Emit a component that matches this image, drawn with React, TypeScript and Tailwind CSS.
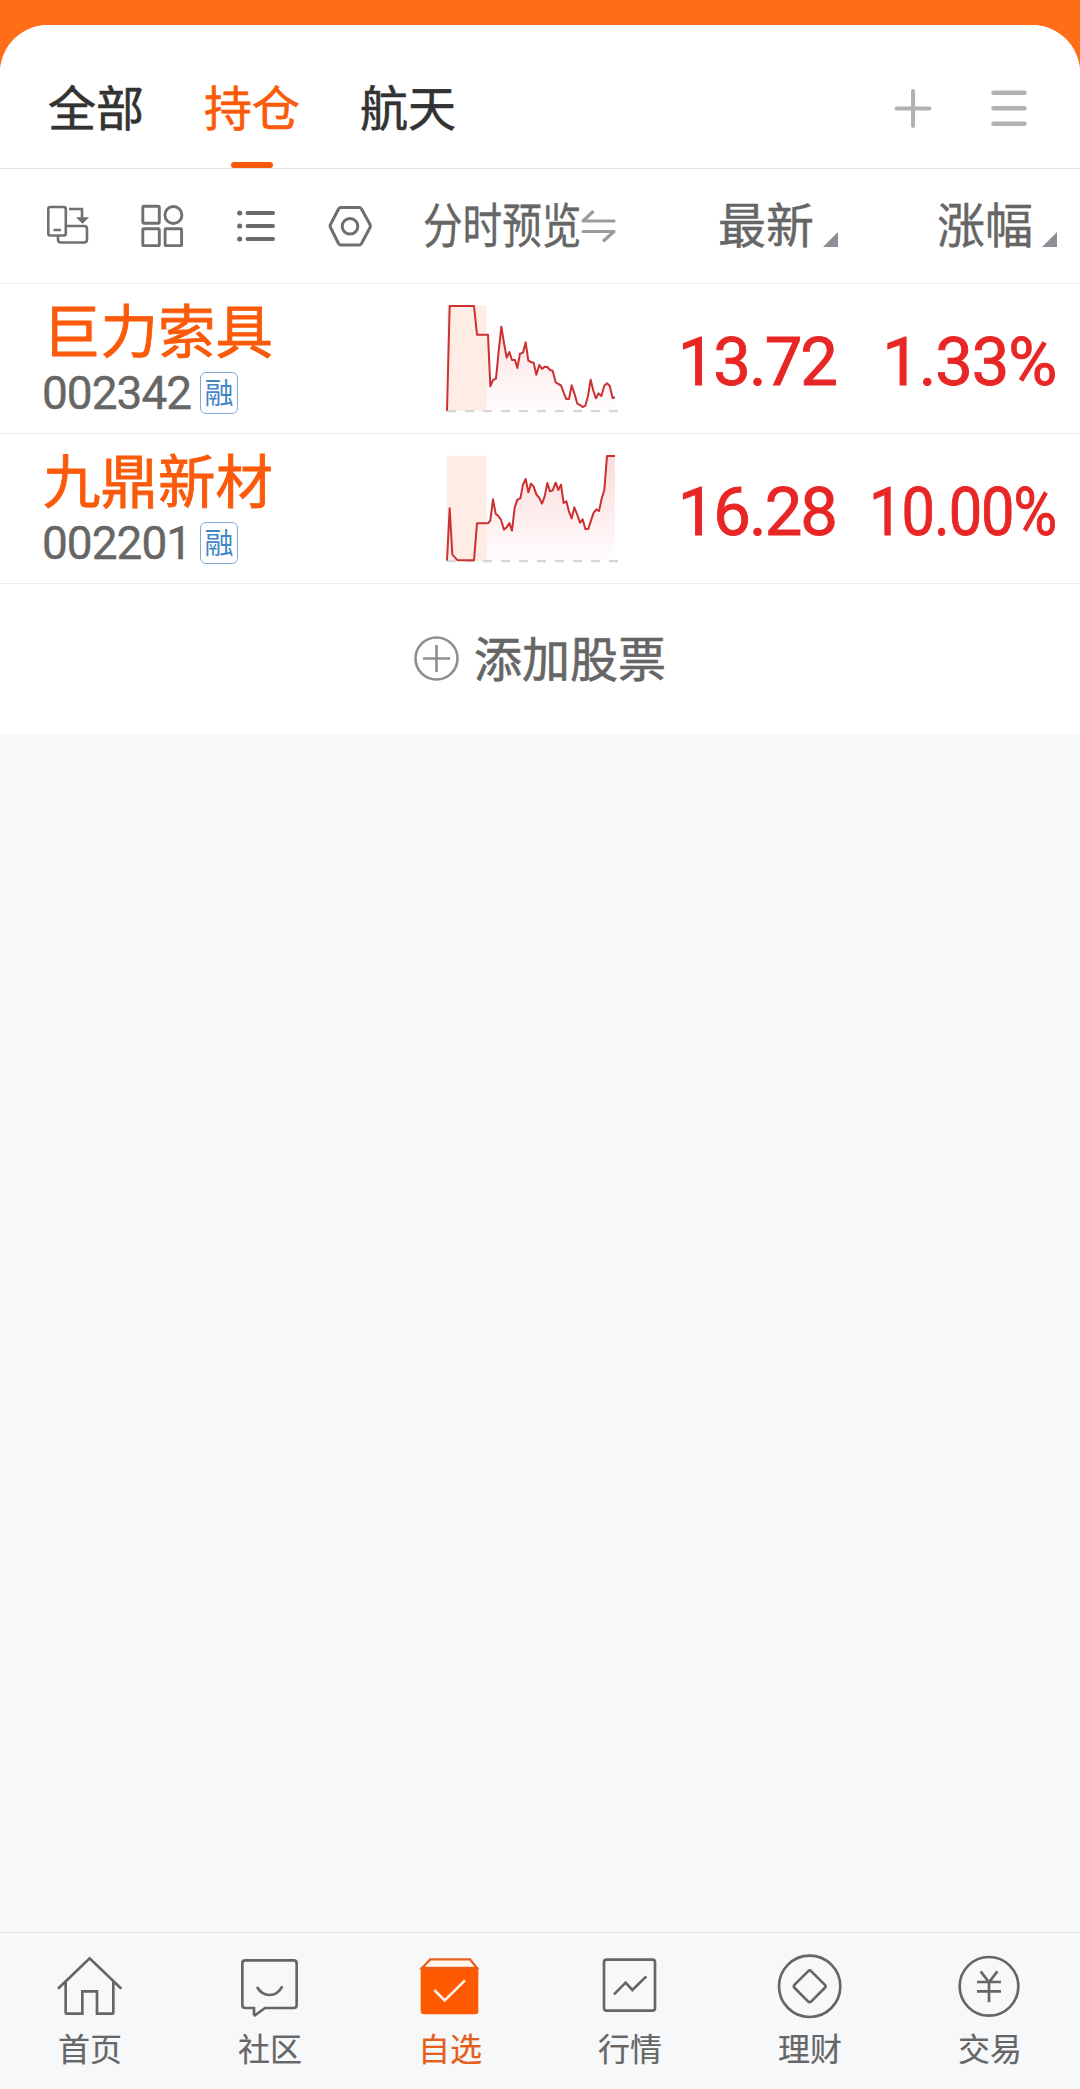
import React from 'react';

const stocks = [
  {
    name: '巨力索具',
    code: '002342',
    price: '13.72',
    change: '1.33%',
    changeClass: '',
    points:
      '51,363 59,49 132,49 141,135 174,135 181,290 189,271 198,267 206,185 214,111 222,160 230,204 238,187 246,211 255,211 262,235 270,192 279,189 287,158 295,213 303,217 311,219 319,255 328,226 336,238 344,231 352,232 360,241 368,243 377,278 385,283 393,287 401,309 409,328 417,328 425,287 434,314 442,342 450,346 458,352 466,348 474,319 482,270 490,303 498,326 506,311 514,319 523,288 531,281 539,288 548,325 555,323',
  },
  {
    name: '九鼎新材',
    code: '002201',
    price: '16.28',
    change: '10.00%',
    changeClass: 'scale-x-[0.89]',
    points:
      '51,363 59,206 67,345 83,362 132,362 141,251 174,251 181,242 189,179 197,222 205,229 213,240 222,270 230,263 238,250 246,273 254,204 262,180 271,176 279,135 287,118 295,158 303,132 311,141 319,164 328,175 336,192 344,170 352,130 360,155 368,152 377,129 385,151 393,135 401,190 409,185 417,216 425,236 433,203 442,226 450,249 458,239 466,268 475,268 483,242 491,219 499,209 507,214 515,177 523,150 531,49 555,49',
  },
];

function Sparkline({ id, points }: { id: string; points: string }) {
  return (
    <svg className="block h-[110px] w-[173px]" viewBox="45 40 519 330" fill="none">
      <defs>
        <linearGradient id={id} gradientUnits="userSpaceOnUse" x1="0" y1="49" x2="0" y2="363">
          <stop offset="0" stopColor="#e9252a" stopOpacity="0.17" />
          <stop offset="1" stopColor="#e9252a" stopOpacity="0.01" />
        </linearGradient>
      </defs>
      <polygon points={`${points} 555,363`} fill={`url(#${id})`} />
      <rect x="51" y="48" width="119" height="316" fill="#ffede5" />
      <path d="M51 364.5H564" stroke="#d6d6da" strokeWidth="7" strokeDasharray="27 27" />
      <polyline points={points} stroke="#cc3030" strokeWidth="6" strokeLinejoin="round" />
    </svg>
  );
}

function Triangle() {
  return (
    <svg className="mt-[27px] h-[15px] w-[15px]" viewBox="0 0 15 15">
      <path d="M15 0V15H0Z" fill="#8e8e96" />
    </svg>
  );
}

const navItems = [
  {
    label: '首页',
    icon: <path d="M174 236L269 145L364 236M197 216V308Q197 311 200 311H247V244H291V311H337Q340 311 340 308V216" />,
  },
  {
    label: '社区',
    icon: (
      <>
        <path d="M196 151H341Q350 151 350 160V285Q350 294 341 294H255L225 316L222 313V294H196Q187 294 187 285V160Q187 151 196 151Z" />
        <path d="M231 231Q245 255 269 255Q293 255 307 229" />
      </>
    ),
  },
  {
    label: '自选',
    active: true,
    icon: (
      <>
        <path d="M182 172H355V303Q355 313 345 313H192Q182 313 182 303Z" fill="#ff5a00" stroke="none" />
        <path d="M186 174L211 148H330L351 174Z" fill="#fff6f0" stroke="#e8601c" strokeWidth="7" />
        <path d="M223 240L254 271L315 211" stroke="#fff0e6" />
      </>
    ),
  },
  {
    label: '行情',
    icon: (
      <>
        <rect x="192" y="149" width="153" height="153" rx="8" />
        <path d="M222 253L257 218L277 240L319 199" />
      </>
    ),
  },
  {
    label: '理财',
    icon: (
      <>
        <circle cx="269" cy="229" r="92" />
        <path d="M264 184Q269 179 274 184L314 224Q319 229 314 234L274 274Q269 279 264 274L224 234Q219 229 224 224Z" />
      </>
    ),
  },
  {
    label: '交易',
    icon: (
      <>
        <circle cx="267" cy="229" r="88" />
        <path d="M242 184L267 217L292 184M231 216H303M231 244H303M267 216V277" />
      </>
    ),
  },
];

export default function App() {
  return (
    <div className="w-full h-[2089px] flex flex-col bg-[#ff6d17] pt-[25px] overflow-hidden font-['Roboto','Noto_Sans_CJK_SC',sans-serif] text-[#666666]">
      <div className="flex-1 flex flex-col bg-[#f7f8fa] rounded-t-[48px] overflow-hidden">
        {/* Group tabs */}
        <header className="h-[144px] shrink-0 bg-white border-b border-[#e4e4e6] flex pl-12 pr-[53px] text-[48px] leading-[169px] text-[#333333] [-webkit-text-stroke:0.6px]">
          <div className="flex gap-[60px]">
            <span>全部</span>
            <span className="relative text-[#fa5a0a]">
              持仓
              <i className="absolute left-[27px] top-[137px] h-[6px] w-[42px] rounded-full bg-[#fa5a0a]" />
            </span>
            <span>航天</span>
          </div>
          <div className="ml-auto mt-[63px] flex h-10 gap-[59px]">
            <svg className="h-10 w-[38px]" viewBox="0 0 38 40" stroke="#b2b2b2" strokeWidth="4" strokeLinecap="round">
              <path d="M19 3V38M2.500 20.500H35.500" />
            </svg>
            <svg className="h-10 w-9" viewBox="0 0 36 40" stroke="#b2b2b2" strokeWidth="4.500" strokeLinecap="round">
              <path d="M2.500 4.700H33.500M2.500 20.300H33.500M2.500 35.800H33.500" />
            </svg>
          </div>
        </header>

        {/* Column headings */}
        <div className="h-[115px] shrink-0 bg-white border-b border-[#ececee] flex items-center pl-[46px] pr-[23px] text-[48px]">
          <div className="flex gap-[50px] pb-[3px]">
            <svg className="h-11 w-11" viewBox="0 0 44 44" fill="none" stroke="#707070" strokeWidth="2.600">
              <rect x="2.300" y="4" width="17.500" height="28.500" rx="2" />
              <path d="M7.500 27H15M23 6H36V16M12 33V36.500Q12 39.500 15 39.500H38Q41 39.500 41 36.500V25.500Q41 23 38 23H20.500" />
              <path d="M33 15.500H40L36.500 19Z" fill="#707070" />
            </svg>
            <svg className="h-11 w-11" viewBox="0 0 44 44" fill="none" stroke="#707070" strokeWidth="2.900">
              <rect x="2.800" y="3.200" width="16.500" height="17" rx="1" />
              <circle cx="33.400" cy="12" r="8.500" />
              <rect x="2.800" y="25.700" width="16.500" height="17" rx="1" />
              <rect x="25.100" y="25.700" width="16.500" height="17" rx="1" />
            </svg>
            <svg className="h-11 w-11" viewBox="0 0 44 44" fill="none" stroke="#6a6a6a" strokeWidth="4" strokeLinecap="round">
              <path d="M13.500 10H39M13.500 23H39M13.500 36H39" />
              <path d="M5.600 10H5.700M5.600 23H5.700M5.600 36H5.700" strokeWidth="5" />
            </svg>
            <svg className="h-11 w-11" viewBox="0 0 44 44" fill="none" stroke="#6e6e6e" strokeWidth="3" strokeLinejoin="round">
              <path d="M13 4.500H31Q32.500 4.500 33.500 6L42 21.500Q42.700 23 42 24.500L33.500 40.500Q32.500 42 31 42H13Q11.500 42 10.500 40.500L2.500 24.500Q1.700 23 2.500 21.500L10.500 6Q11.500 4.500 13 4.500Z" />
              <circle cx="22" cy="23.300" r="7.800" />
            </svg>
          </div>
          <div className="ml-[51px] flex w-[193px] items-center">
            <span className="w-[158px] origin-left scale-x-[0.825] whitespace-nowrap pt-px [-webkit-text-stroke:0.4px]">分时预览</span>
            <svg className="h-8 w-[35px] shrink-0" viewBox="0 0 35 32" fill="none" stroke="#9c9c9c" strokeWidth="3.200" strokeLinecap="round" strokeLinejoin="round">
              <path d="M33 11H2L11.500 2M2 21.500H33L23 30.500" />
            </svg>
          </div>
          <div className="ml-auto flex items-center gap-[9px]">
            <span className="pt-px [-webkit-text-stroke:0.4px]">最新</span>
            <Triangle />
          </div>
          <div className="ml-[99px] flex items-center gap-[9px]">
            <span className="pt-px [-webkit-text-stroke:0.4px]">涨幅</span>
            <Triangle />
          </div>
        </div>

        {/* Holdings */}
        {stocks.map((stock) => (
          <div key={stock.code} className="h-[150px] shrink-0 bg-white border-b border-[#ececee] flex pl-[43px] pr-6">
            <div className="w-[402px] pt-[17px]">
              <div className="text-[57.500px] leading-[66px] text-[#fa5a0a] [-webkit-text-stroke:0.8px]">{stock.name}</div>
              <div className="mt-[5px] flex h-[42px] items-center">
                <span className="-ml-px w-[158px] text-[46px] leading-[42px] tracking-[-1px] [-webkit-text-stroke:0.4px]">{stock.code}</span>
                <span className="flex h-[42px] w-[38px] items-center justify-center rounded-[6px] border border-[#7fa9d9] pt-[2px] text-[29px] leading-[40px] text-[#4485c7]">
                  融
                </span>
              </div>
            </div>
            <div className="pt-[19px]">
              <Sparkline id={`fill-${stock.code}`} points={stock.points} />
            </div>
            <div className="flex-1 text-right text-[67px] leading-[157px] tracking-[-2px] text-[#e82626] [-webkit-text-stroke:0.9px]">{stock.price}</div>
            <div className="w-[220px] text-right text-[67px] leading-[157px] tracking-[-1.2px] text-[#e82626] [-webkit-text-stroke:0.9px]">
              <span className={`inline-block origin-right ${stock.changeClass}`}>{stock.change}</span>
            </div>
          </div>
        ))}

        <button className="h-[150px] w-full shrink-0 bg-white flex items-center justify-center gap-[15px] text-[48px] pb-px">
          <svg className="h-[45px] w-[45px]" viewBox="0 0 45 45" fill="none" stroke="#8e8e93" strokeWidth="2.600">
            <circle cx="22.500" cy="22.500" r="21" />
            <path d="M22.500 9V36M9 22.500H36" />
          </svg>
          <span className="pt-1 [-webkit-text-stroke:0.6px]">添加股票</span>
        </button>

        {/* Bottom navigation */}
        <nav className="mt-auto grid h-[157px] shrink-0 grid-cols-6 border-t border-[#e2e3e5]">
          {navItems.map((item) => (
            <div key={item.label} className="flex flex-col items-center pt-[17px]">
              <svg className="h-[72px] w-[72px]" viewBox="162 120 216 216" fill="none" stroke="#666666" strokeWidth="8">
                {item.icon}
              </svg>
              <span className={`mt-[7px] text-[32px] leading-[42px] [-webkit-text-stroke:0.2px] ${item.active ? 'text-[#e2601c]' : ''}`}>{item.label}</span>
            </div>
          ))}
        </nav>
      </div>
    </div>
  );
}
